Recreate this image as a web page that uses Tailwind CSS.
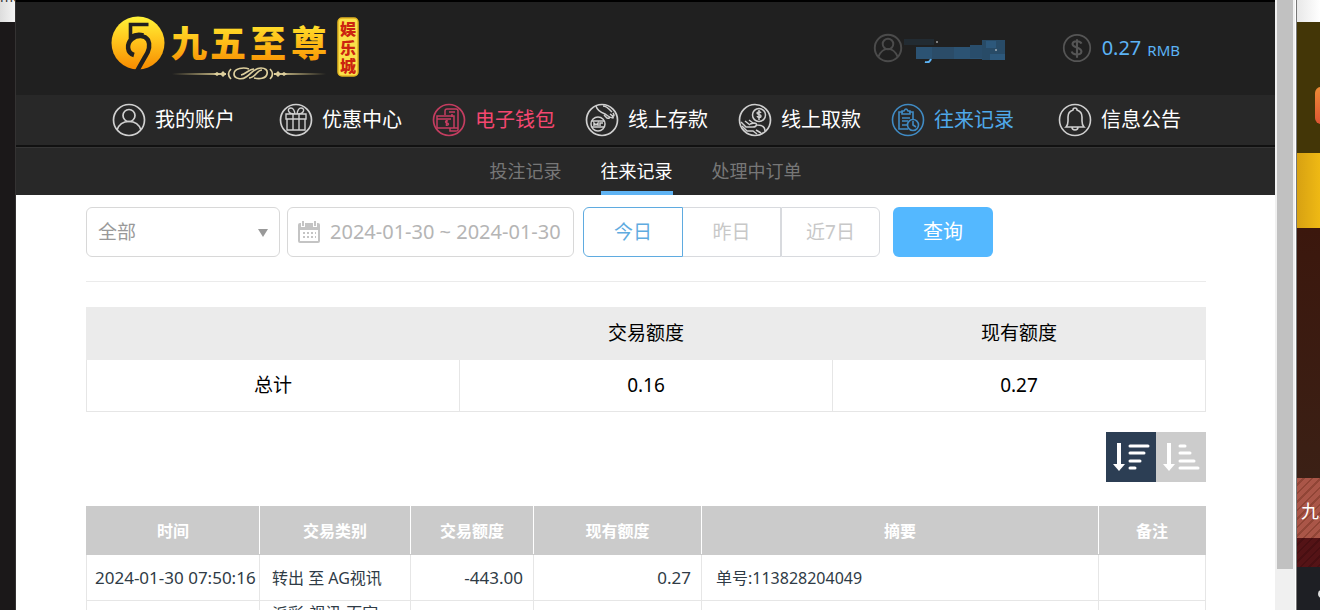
<!DOCTYPE html>
<html lang="zh-CN">
<head>
<meta charset="utf-8">
<title>往来记录</title>
<script src="https://cdn.jsdelivr.net/npm/@tailwindcss/browser@4"></script>
</head>
<body class="flex h-screen overflow-hidden bg-white font-['Noto_Sans','Noto_Sans_CJK_SC',sans-serif]">
<div class="w-4 shrink-0 bg-[#1b1819] border-r border-[#343232]">
  <div class="h-[22px] bg-linear-to-r from-[#dddddd] to-[#f4f4f4] overflow-hidden"><p class="-mt-[11px] text-sm leading-4 text-[#333333]">mu</p></div>
</div>

<main class="flex-1 min-w-0 overflow-hidden">
  <header class="h-[95px] bg-[#202020] border-t-2 border-black px-[95px] flex justify-between items-start">
    <svg class="mt-[10px]" width="252" height="70" viewBox="1 0 252 70" role="img" aria-label="九五至尊娱乐城">
      <defs>
        <linearGradient id="gold" x1="0" y1="0" x2="0" y2="1"><stop offset="0" stop-color="#fff338"/><stop offset=".45" stop-color="#ffc51c"/><stop offset="1" stop-color="#f78b00"/></linearGradient>
        <linearGradient id="rule" x1="0" x2="1"><stop offset="0" stop-color="#d8c47e" stop-opacity="0"/><stop offset="1" stop-color="#e0d09a"/></linearGradient>
        <linearGradient id="rule-end" x1="0" x2="1"><stop offset="0" stop-color="#e0d09a"/><stop offset="1" stop-color="#d8c47e" stop-opacity="0"/></linearGradient>
      </defs>
      <circle cx="28" cy="31" r="26.500" fill="url(#gold)"/>
      <path d="M38.500 12.500H20.500V25q6-4 13-2" fill="none" stroke="#202020" stroke-width="3.600"/>
      <path d="M24 43c-7-2-8-11-2-16 5-4 13-4 16 1 3 6 1 11-3 17L27 59" fill="none" stroke="#202020" stroke-width="4.500"/>
      <g fill="url(#gold)" font-family="'Noto Sans CJK SC',sans-serif" font-weight="900" font-size="36" text-anchor="middle">
        <text x="79" y="45">九</text><text x="118" y="45">五</text><text x="158" y="45">至</text><text x="199" y="45">尊</text>
      </g>
      <rect x="62" y="61" width="54" height="2" fill="url(#rule)"/><rect x="164" y="61" width="52" height="2" fill="url(#rule-end)"/>
      <g fill="none" stroke="#ddcf9d" stroke-width="1.700">
        <path d="M139 57c-5-2-15-1-15 5 0 5 8 6 12 3 5-3 8-9 15-9 4 0 7 2 6 6-1 5-8 5-13 4"/>
        <path d="M139 66c6 0 8-8 13-8M131 63c5-1 8-6 13-6"/>
        <path d="M121 57q-5 5 0 10M160 57q5 5 0 10"/>
      </g>
      <path d="M107 60l3 2-3 2-3-2zM113 59l3 3-3 3-3-3zM168 59l3 3-3 3-3-3zM174 60l3 2-3 2-3-2z" fill="#ddcf9d"/>
      <rect x="228" y="6" width="20" height="58" rx="4" fill="#fbe14a" stroke="#e1b320" stroke-width="1.500"/>
      <g fill="#cb2410" font-family="'Noto Sans CJK SC',sans-serif" font-weight="900" font-size="16" text-anchor="middle">
        <text x="238" y="23">娱</text><text x="238" y="42">乐</text><text x="238" y="60">城</text>
      </g>
    </svg>
    <div class="flex items-center mt-[30px] h-8 text-[#5cb3f5]">
      <svg width="30" height="30" viewBox="0 0 34 34" fill="none" stroke="#4b4b4b" stroke-width="2.200"><circle cx="17" cy="17" r="15"/><circle cx="17" cy="12.500" r="6"/><path d="M6 27c3-7 6-9 11-9s8 2 11 9"/></svg>
      <svg class="mr-[55px]" width="104" height="30" viewBox="1 -1 104 30" aria-hidden="true">
        <path d="M2 5h30v6H2z" fill="#222b32"/><path d="M14 13h89v12H14z" fill="#2c5373"/><path d="M30 13h22v12H30z" fill="#2b4c68"/><path d="M68 11h25v13H68z" fill="#294d6b"/><path d="M80 6h23v20H80z" fill="#284b67"/><path d="M84 7h10v7H84zM88 20h15v6H88z" fill="#2d587b"/><path d="M29 25c-1 3-3 4-6 3" stroke="#5cb3f5" stroke-width="2" fill="none"/><path d="M34 8h2M93 16h2" stroke="#dddddd"/>
      </svg>
      <svg class="mr-[10px]" width="30" height="30" viewBox="0 0 34 34" fill="none" stroke="#555555" stroke-width="2"><circle cx="17" cy="17" r="15"/><path d="M22 12c-1-3-9-4-10 0-1 5 10 4 10 9 0 5-10 4-11 0M17 7v21" stroke-width="2.400"/></svg>
      <span class="text-xl mr-[6px]">0.27</span><span class="text-[15px] mt-1">RMB</span>
    </div>
  </header>

  <nav class="h-[52px] bg-[#282828] border-b-2 border-[#111111] px-[96px] text-xl leading-8 text-white whitespace-nowrap" aria-label="主导航">
    <ul class="flex h-full items-center gap-[30px]">
      <li class="mr-[14px]"><a href="#" class="flex items-center gap-[9px]">
        <svg width="34" height="34" viewBox="0 0 34 34" fill="none" stroke="#d0d0d0" stroke-width="1.700"><circle cx="17" cy="17" r="15.500"/><circle cx="17" cy="12.500" r="6"/><path d="M5 27c2-6 6-8.500 12-8.500S27 21 29 27"/></svg><span>我的账户</span></a></li>
      <li><a href="#" class="flex items-center gap-[9px]">
        <svg width="34" height="34" viewBox="0 0 34 34" fill="none" stroke="#d0d0d0" stroke-width="1.400"><circle cx="17" cy="17" r="15.500" stroke-width="1.700"/><path d="M7 11h20v5H7zM8 16v11h18V16M14 11v16M20 11v16M16 11c-8 0-8-6-4-6 3 0 4 6 4 6M18 11c8 0 8-6 4-6-3 0-4 6-4 6"/></svg><span>优惠中心</span></a></li>
      <li><a href="#" class="flex items-center gap-[9px] text-[#f44770]">
        <svg width="34" height="34" viewBox="0 0 34 34" fill="none" stroke="#c53d60" stroke-width="1.500"><circle cx="17" cy="17" r="15.500" stroke-width="1.700"/><path d="M13 12V8q0-2 2-2h9q2 0 2 2v19q0 1-2 1h-6v-3M17 9h6M5 13h17v12H5zM5 16h14M20 11v3M22 25h4"/><path d="M16 18c-3-1-3 2-1 2s2 3-1 2M14.500 17v6"/></svg><span>电子钱包</span></a></li>
      <li><a href="#" class="flex items-center gap-[9px]">
        <svg width="34" height="34" viewBox="0 0 34 34" fill="none" stroke="#d0d0d0" stroke-width="1.500"><circle cx="17" cy="17" r="15.500" stroke-width="1.700"/><circle cx="13" cy="21" r="7"/><path d="M7 18h12M7 24h12M9 23v-3l2 2 2-2v3M15 23v-3h3"/><path d="M11 3c1 4 4 6 9 8l3 2q3 2 5 2 1-1-3-4l3 2q2 0 0-3M18 3c4 0 6 3 9 6M19 12l3 3q3 1 2-1"/></svg><span>线上存款</span></a></li>
      <li><a href="#" class="flex items-center gap-[9px]">
        <svg width="34" height="34" viewBox="0 0 34 34" fill="none" stroke="#d0d0d0" stroke-width="1.500"><circle cx="17" cy="17" r="15.500" stroke-width="1.700"/><circle cx="21" cy="12" r="6.500"/><path d="M23 10c-1-2-4-1-4 0 0 2 4 1 4 3 0 2-3 2-4 0M21 7v10"/><path d="M3 19l5 5h7c4 0 5-4 1-4l-4 1M7 18l5 4M11 17l4 3M4 23l5 5h6l4 3M19 22c6 0 8 3 8 6M18 27l5 3"/></svg><span>线上取款</span></a></li>
      <li class="mr-[14px]"><a href="#" class="flex items-center gap-[9px] text-[#4fa9ea]" aria-current="page">
        <svg width="34" height="34" viewBox="0 0 34 34" fill="none" stroke="#408bc4" stroke-width="1.600"><circle cx="17" cy="17" r="15.500"/><path d="M17 26H8V9h4M18 9h4v7M11 11V8h2q2-4 4 0h2v3zM11 15h8M11 18h6M11 22h5"/><circle cx="22" cy="22" r="5.500"/><path d="M22 18v4l3 2"/></svg><span>往来记录</span></a></li>
      <li><a href="#" class="flex items-center gap-[9px]">
        <svg width="34" height="34" viewBox="0 0 34 34" fill="none" stroke="#d0d0d0" stroke-width="1.600"><circle cx="17" cy="17" r="15.500"/><path d="M8 24q2-2 2-6v-4c0-4 2-6 5-7q0-2 2-2t2 2c3 1 5 3 5 7v4q0 4 2 6zM14 24q0 3 3 3t3-3"/></svg><span>信息公告</span></a></li>
    </ul>
  </nav>
  <nav class="h-12 bg-[#282828] border-t border-[#363636] flex justify-center gap-[39px] text-lg whitespace-nowrap" aria-label="记录">
    <a href="#" class="leading-[46px] text-[#777777]">投注记录</a>
    <a href="#" class="leading-[46px] text-white border-b-4 border-[#5fb3f3] overflow-hidden" aria-current="page">往来记录</a>
    <a href="#" class="leading-[46px] text-[#777777]">处理中订单</a>
  </nav>

  <div class="pl-[70px] pr-[69px] pt-3">
    <form class="flex h-[75px] items-start border-b border-[#ebebeb] text-[19px]">
      <div class="relative w-[194px] h-[50px] mr-[7px]">
        <select aria-label="类型" class="appearance-none w-full h-full rounded-md border border-[#d8d8d8] bg-white px-[11px] text-[#999999]"><option>全部</option></select>
        <svg class="absolute right-3 top-[22px] pointer-events-none" width="10" height="8" viewBox="0 0 10 8"><path d="M0 0h10L5 8z" fill="#999999"/></svg>
      </div>
      <label class="flex items-center w-[287px] h-[50px] rounded-md border border-[#d8d8d8] pl-[10px] mr-[9px]">
        <svg class="shrink-0" width="22" height="22" viewBox="0 0 22 22" aria-hidden="true"><path d="M2 2h18q2 0 2 2v16q0 2-2 2H2q-2 0-2-2V4q0-2 2-2z" fill="#c4c4c4"/><path d="M2 9h18v11H2z" fill="#fff"/><path d="M3 0h4v6H3zM15 0h4v6h-4z" fill="#fff"/><path d="M4 0h2v5H4zM16 0h2v5h-2z" fill="#c4c4c4"/><path d="M9 11h2v2H9zM13 11h2v2h-2zM17 11h1v2h-1zM5 15h2v2H5zM9 15h2v2H9zM13 15h2v2h-2zM17 15h1v2h-1zM5 11h2v2H5z" fill="#c4c4c4"/></svg>
        <input aria-label="日期范围" class="min-w-0 flex-1 ml-[10px] text-xl text-[#b5b5b5] outline-none" value="2024-01-30 ~ 2024-01-30">
      </label>
      <div class="flex h-[50px] mr-[13px] text-[#c8c8c8]">
        <button type="button" class="w-[100px] rounded-l-md border border-[#5fabe0] text-[#5fabe0]">今日</button>
        <button type="button" class="w-[98px] border-y border-r border-[#d8dade]">昨日</button>
        <button type="button" class="w-[99px] rounded-r-md border border-[#d8dade]">近7日</button>
      </div>
      <button type="button" class="w-[100px] h-[50px] rounded-md bg-[#54b8ff] text-white text-xl">查询</button>
    </form>

    <table class="mt-[25px] w-full table-fixed border-collapse text-center text-[19px] text-black">
      <thead><tr class="h-[52px] bg-[#ebebeb]"><th class="border border-[#ebebeb]"></th><th class="border border-[#ebebeb] font-normal">交易额度</th><th class="border border-[#ebebeb] font-normal">现有额度</th></tr></thead>
      <tbody><tr class="h-[52px]"><td class="border border-[#e6e6e6]">总计</td><td class="border border-[#e6e6e6]">0.16</td><td class="border border-[#e6e6e6]">0.27</td></tr></tbody>
    </table>

    <div class="mt-5 flex justify-end">
      <button type="button" aria-label="降序" class="size-[50px] bg-[#2c3e54]"><svg width="50" height="50" viewBox="0 0 50 50" fill="none" stroke="#fff" stroke-width="3" stroke-linecap="round"><path d="M13 11v23" stroke-width="4" stroke-linecap="butt"/><path d="M7 32h12l-6 7z" fill="#fff" stroke="none"/><path d="M24 14h18M24 21h14M24 29h10M24 36h5"/></svg></button>
      <button type="button" aria-label="升序" class="size-[50px] bg-[#cccccc]"><svg width="50" height="50" viewBox="0 0 50 50" fill="none" stroke="#fff" stroke-width="3" stroke-linecap="round"><path d="M13 11v23" stroke-width="4" stroke-linecap="butt"/><path d="M7 32h12l-6 7z" fill="#fff" stroke="none"/><path d="M24 14h5M24 21h10M24 29h14M24 36h18"/></svg></button>
    </div>

    <table class="mt-6 w-full table-fixed border-collapse text-base text-[#2f3b46]">
      <colgroup><col class="w-[173px]"><col class="w-[151px]"><col class="w-[123px]"><col class="w-[168px]"><col><col class="w-[107px]"></colgroup>
      <thead><tr class="h-12 bg-[#cbcbcb] text-white">
        <th class="border border-[#cbcbcb] border-r-white">时间</th><th class="border border-[#cbcbcb] border-r-white">交易类别</th><th class="border border-[#cbcbcb] border-r-white">交易额度</th><th class="border border-[#cbcbcb] border-r-white">现有额度</th><th class="border border-[#cbcbcb] border-r-white">摘要</th><th class="border border-[#cbcbcb]">备注</th>
      </tr></thead>
      <tbody>
        <tr class="h-[46px]">
          <td class="border border-[#e6e6e6] pl-2 text-[17px] whitespace-nowrap">2024-01-30 07:50:16</td><td class="border border-[#e6e6e6] px-3">转出 至 AG视讯</td><td class="border border-[#e6e6e6] px-[10px] text-right text-[17px]">-443.00</td><td class="border border-[#e6e6e6] px-[10px] text-right text-[17px]">0.27</td><td class="border border-[#e6e6e6] px-[14px]">单号:113828204049</td><td class="border border-[#e6e6e6]"></td>
        </tr>
        <tr class="h-[47px]">
          <td class="border border-[#e6e6e6]"></td><td class="border border-[#e6e6e6] pl-3 pr-5 align-top">派彩-视讯-百家乐</td><td class="border border-[#e6e6e6]"></td><td class="border border-[#e6e6e6]"></td><td class="border border-[#e6e6e6]"></td><td class="border border-[#e6e6e6]"></td>
        </tr>
      </tbody>
    </table>
  </div>
</main>

<div class="w-[21px] shrink-0 bg-[#f0f0f0] border-r border-white px-[2px]"><div class="h-[569px] bg-[#c1c1c1]"></div></div>

<aside class="w-6 shrink-0 overflow-hidden flex flex-col border-l border-[#777777]">
  <div class="h-[22px] shrink-0 bg-linear-to-r from-[#e8e8e8] to-white"></div>
  <div class="h-[131px] shrink-0 bg-[#433607] pt-[65px] pl-[18px]"><div class="h-[37px] w-8 rounded-md bg-linear-to-b from-[#ed8a35] to-[#dd5433]"></div></div>
  <div class="h-[75px] shrink-0 bg-linear-to-r from-[#d7a112] to-[#efb914]"></div>
  <div class="h-[250px] shrink-0 bg-linear-to-b from-[#3b170d] to-[#3b2015]"></div>
  <div class="h-[60px] shrink-0 bg-[repeating-linear-gradient(135deg,#aa5648_0px,#aa5648_4px,#914536_4px,#914536_6px)] pl-1 text-lg leading-[66px] text-white whitespace-nowrap">九五</div>
  <div class="h-[29px] shrink-0 bg-[repeating-linear-gradient(135deg,#541316_0px,#541316_4px,#480f12_4px,#480f12_6px)]"></div>
  <div class="flex-1 bg-[#1e1f24] pt-[23px] pl-[21px]"><div class="size-2 rounded-full border-2 border-[#dddddd]"></div></div>
</aside>
</body>
</html>
